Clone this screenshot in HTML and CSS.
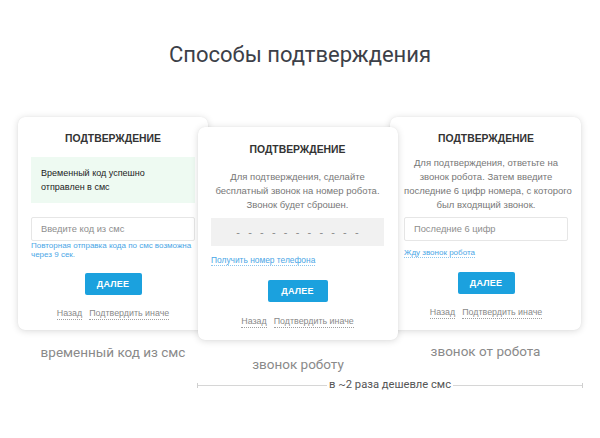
FILE: index.html
```
<!DOCTYPE html>
<html lang="ru">
<head>
<meta charset="utf-8">
<title>Способы подтверждения</title>
<link rel="stylesheet" href="styles.css">
</head>
<body>
<div class="page">
  <h1 class="title">Способы подтверждения</h1>
  <div class="row">
    <div class="col col-1">
      <div class="card card-1">
        <div class="card-head">ПОДТВЕРЖДЕНИЕ</div>
        <div class="success">Временный код успешно<br>отправлен в смс</div>
        <div class="input">Введите код из смс</div>
        <div class="hint">Повторная отправка кода по смс возможна<br>через 9 сек.</div>
        <div class="btn">ДАЛЕЕ</div>
        <div class="links"><span class="dl">Назад</span><span class="dl">Подтвердить иначе</span></div>
      </div>
      <div class="caption cap-1">временный код из смс</div>
    </div>
    <div class="col col-2">
      <div class="card card-2">
        <div class="card-head">ПОДТВЕРЖДЕНИЕ</div>
        <div class="desc desc-2">Для подтверждения, сделайте<br>бесплатный звонок на номер робота.<br>Звонок будет сброшен.</div>
        <div class="phone"><span>-</span><span>-</span><span>-</span><span>-</span><span>-</span><span>-</span><span>-</span><span>-</span><span>-</span><span>-</span><span>-</span></div>
        <div class="link link-2"><span class="bl">Получить номер телефона</span></div>
        <div class="btn btn-2">ДАЛЕЕ</div>
        <div class="links links-2"><span class="dl">Назад</span><span class="dl">Подтвердить иначе</span></div>
      </div>
      <div class="caption cap-2">звонок роботу</div>
    </div>
    <div class="col col-3">
      <div class="card card-3">
        <div class="card-head">ПОДТВЕРЖДЕНИЕ</div>
        <div class="desc desc-3">Для подтверждения, ответьте на<br>звонок робота. Затем введите<br>последние 6 цифр номера, с которого<br>был входящий звонок.</div>
        <div class="input input-3">Последние 6 цифр</div>
        <div class="link link-3"><span class="bl">Жду звонок робота</span></div>
        <div class="btn">ДАЛЕЕ</div>
        <div class="links"><span class="dl">Назад</span><span class="dl">Подтвердить иначе</span></div>
      </div>
      <div class="caption cap-3">звонок от робота</div>
    </div>
  </div>
  <div class="price">
    <span class="tick"></span><span class="rule"></span><span class="price-text">в ~2 раза дешевле смс</span><span class="rule"></span><span class="tick"></span>
  </div>
</div>
</body>
</html>
```
FILE: styles.css
```
html, body {
  margin: 0;
  padding: 0;
  background: #ffffff;
}
.page {
  width: 600px;
  height: 438px;
  overflow: hidden;
  font-family: "Liberation Sans", Arial, sans-serif;
  white-space: nowrap;
}
.title {
  margin: 0;
  padding-top: 42px;
  text-align: center;
  font-family: Roboto, "Liberation Sans", sans-serif;
  font-weight: 400;
  font-size: 22px;
  line-height: 26px;
  color: #3c4048;
}
.row {
  display: flex;
  align-items: flex-start;
  margin-top: 49px;
  padding-left: 18px;
}
.col {
  display: flex;
  flex-direction: column;
  align-items: center;
}
.col-1 { width: 190px; z-index: 1; }
.col-2 { width: 200px; margin-left: -10px; margin-top: 10px; z-index: 3; }
.col-3 { width: 191px; margin-left: -8px; z-index: 2; }
.card {
  box-sizing: border-box;
  width: 100%;
  height: 213px;
  background: #ffffff;
  border-radius: 7px;
  box-shadow: 0 1px 7px rgba(0, 0, 0, 0.15), 0 0 1px rgba(0, 0, 0, 0.08);
  padding: 15px 13px 0;
  display: flex;
  flex-direction: column;
}
.card-2 { padding-top: 16px; padding-right: 14px; }
.card-3 { padding-left: 14px; padding-right: 13px; }
.card-head {
  text-align: center;
  font-weight: 700;
  font-size: 10.4px;
  line-height: 14px;
  color: #333333;
}
.success {
  margin-top: 11px;
  background: #eefaf2;
  padding: 9px 10px;
  font-size: 9px;
  line-height: 14px;
  color: #222222;
}
.input {
  box-sizing: border-box;
  margin-top: 14px;
  height: 24px;
  border: 1px solid #e6e6e6;
  border-radius: 2px;
  padding-left: 9px;
  font-size: 9.3px;
  line-height: 22px;
  color: #8e8e8e;
}
.input-3 { margin-top: 5px; }
.hint {
  font-size: 8px;
  line-height: 9px;
  color: #4aa6e6;
}
.btn {
  align-self: center;
  margin-top: 14px;
  width: 57px;
  height: 22px;
  background: #1ba1de;
  border-radius: 2px;
  color: #ffffff;
  font-weight: 700;
  font-size: 9px;
  line-height: 22px;
  text-align: center;
  letter-spacing: 0.2px;
}
.btn-2 { width: 60px; margin-top: 15px; }
.links {
  margin-top: 13px;
  display: flex;
  justify-content: center;
  gap: 7px;
  font-size: 8.9px;
  line-height: 14px;
  color: #8a8a8a;
}
.links-2 { margin-top: 14px; }
.dl {
  border-bottom: 1px dotted #a0a0a0;
  line-height: 11px;
}
.desc {
  text-align: center;
  font-size: 9.5px;
  line-height: 14px;
  color: #777777;
}
.desc-2 { margin-top: 13px; }
.desc-3 { margin-top: 10px; }
.phone {
  margin-top: 6px;
  height: 28px;
  background: #f1f1f1;
  display: flex;
  justify-content: center;
  align-items: center;
  gap: 8.2px;
  font-size: 11px;
  color: #8a8a8a;
}
.link {
  font-size: 8.4px;
  line-height: 10px;
  color: #4aa6e6;
}
.link-2 { margin-top: 9px; }
.link-3 { margin-top: 7px; font-size: 8px; }
.bl {
  border-bottom: 1px dotted #8cc6ee;
}
.caption {
  margin-top: 13px;
  font-family: Roboto, "Liberation Sans", sans-serif;
  font-size: 13.5px;
  line-height: 18px;
  color: #8a8a8a;
}
.cap-2 { margin-top: 15px; }
.cap-3 { margin-top: 12px; }
.price {
  margin-top: 5px;
  margin-left: 197px;
  width: 386px;
  height: 14px;
  display: flex;
  align-items: center;
}
.rule {
  flex: 1;
  height: 1px;
  background: #d6d6d6;
}
.tick {
  width: 1px;
  height: 5px;
  background: #cfcfcf;
}
.price-text {
  padding: 0 2px;
  font-family: Roboto, "Liberation Sans", sans-serif;
  font-size: 11.2px;
  line-height: 14px;
  color: #555555;
}
```
